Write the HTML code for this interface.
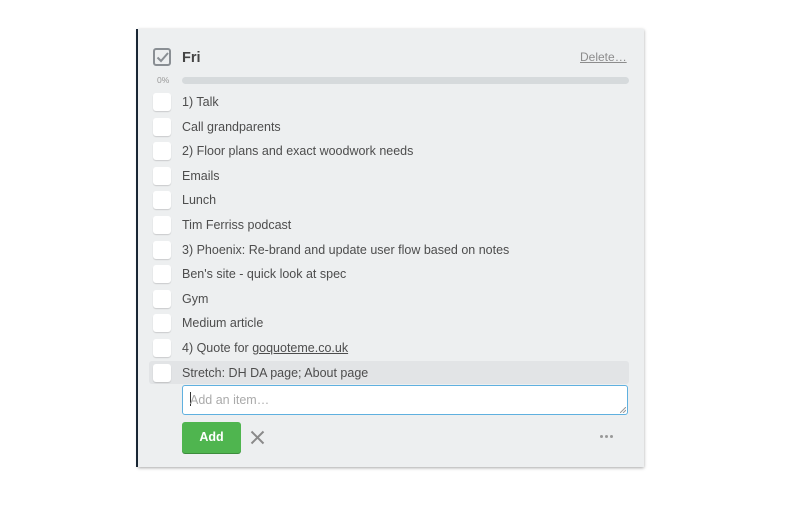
<!DOCTYPE html>
<html><head><style>
body{margin:0;width:800px;height:523px;background:#fff;font-family:"Liberation Sans",sans-serif;position:relative;overflow:hidden}
.panel{position:absolute;left:138px;top:29px;width:506px;height:438px;background:#edeff0;box-shadow:0 1px 3px rgba(0,0,0,.35)}
.lb{position:absolute;left:136px;top:29px;width:2px;height:438px;background:#1d2b3a}
.t{position:absolute;font-size:12.5px;color:#4d4d4d;white-space:nowrap}
.cb{position:absolute;left:153px;width:18px;height:18px;background:#fff;border-radius:3px;box-shadow:0 1px 1px rgba(0,0,0,.15)}
.d{position:absolute;top:435px;width:3px;height:3px;border-radius:50%;background:#999}
</style></head><body>
<div class="lb"></div>
<div class="panel"></div>
<svg style="position:absolute;left:153px;top:48px" width="20" height="20" viewBox="0 0 20 20"><rect x="1" y="1" width="16" height="16" rx="2" fill="none" stroke="#8a8f94" stroke-width="2"/><path d="M4.5 9.5l3.5 3.5 7-8" fill="none" stroke="#8a8f94" stroke-width="2"/></svg>
<div class="t" style="left:182px;top:50px;font-size:14.5px;font-weight:bold;color:#444">Fri</div>
<div class="t" style="left:580px;top:50px;font-size:12px;color:#8c8c8c;text-decoration:underline">Delete…</div>
<div class="t" style="left:157px;top:75px;font-size:8.5px;color:#999">0%</div>
<div style="position:absolute;left:182px;top:77px;width:447px;height:7px;border-radius:4px;background:#d6dadc"></div>
<div style="position:absolute;left:149px;top:361px;width:480px;height:23px;background:#e2e4e6;border-radius:3px"></div>
<div class="cb" style="top:93px"></div><div class="t" style="left:182px;top:95px">1) Talk</div>
<div class="cb" style="top:118px"></div><div class="t" style="left:182px;top:120px">Call grandparents</div>
<div class="cb" style="top:142px"></div><div class="t" style="left:182px;top:144px">2) Floor plans and exact woodwork needs</div>
<div class="cb" style="top:167px"></div><div class="t" style="left:182px;top:169px">Emails</div>
<div class="cb" style="top:191px"></div><div class="t" style="left:182px;top:193px">Lunch</div>
<div class="cb" style="top:216px"></div><div class="t" style="left:182px;top:218px">Tim Ferriss podcast</div>
<div class="cb" style="top:241px"></div><div class="t" style="left:182px;top:243px">3) Phoenix: Re-brand and update user flow based on notes</div>
<div class="cb" style="top:265px"></div><div class="t" style="left:182px;top:267px">Ben's site - quick look at spec</div>
<div class="cb" style="top:290px"></div><div class="t" style="left:182px;top:292px">Gym</div>
<div class="cb" style="top:314px"></div><div class="t" style="left:182px;top:316px">Medium article</div>
<div class="cb" style="top:339px"></div><div class="t" style="left:182px;top:341px">4) Quote for <span style="text-decoration:underline">goquoteme.co.uk</span></div>
<div class="cb" style="top:364px"></div><div class="t" style="left:182px;top:366px">Stretch: DH DA page; About page</div>
<div style="position:absolute;left:182px;top:385px;width:444px;height:28px;background:#fff;border:1.5px solid #5fb0df;border-radius:3px"></div>
<svg style="position:absolute;left:620px;top:407px" width="6" height="6"><path d="M0 6L6 0M3 6L6 3" stroke="#999" stroke-width="1"/></svg>
<div style="position:absolute;left:190px;top:392px;width:1px;height:14px;background:#333"></div>
<div class="t" style="left:190px;top:393px;color:#aaa">Add an item…</div>
<div style="position:absolute;left:182px;top:422px;width:59px;height:31px;background:#4fb54f;border-radius:3px;box-shadow:0 1px 0 #3c8c3c;color:#fff;font-weight:bold;font-size:12.5px;text-align:center;line-height:31px">Add</div>
<svg style="position:absolute;left:250px;top:430px" width="15" height="15" viewBox="0 0 15 15"><path d="M1.5 1.5l12 12M13.5 1.5l-12 12" stroke="#8a8a8a" stroke-width="2"/></svg>
<div class="d" style="left:600px"></div><div class="d" style="left:605px"></div><div class="d" style="left:610px"></div>
</body></html>
